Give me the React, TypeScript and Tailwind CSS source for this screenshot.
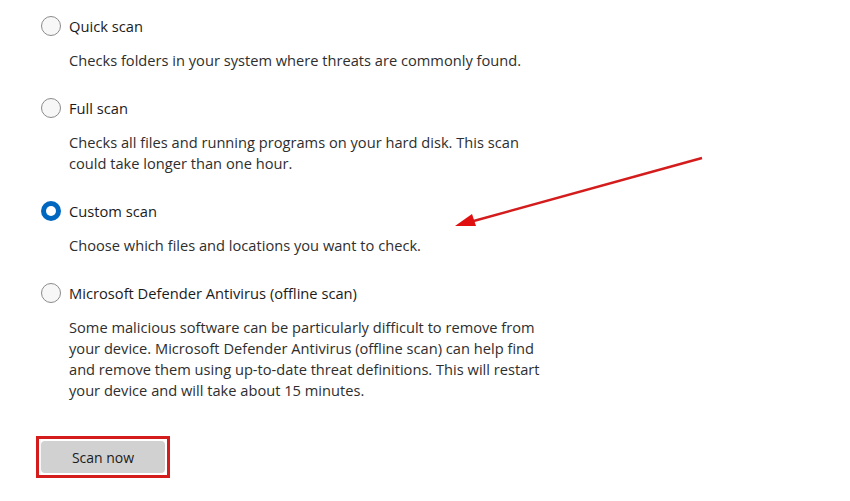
import React from "react";

function Radio({ checked }: { checked?: boolean }) {
  if (checked) {
    return (
      <span className="box-border flex h-[20px] w-[20px] shrink-0 items-center justify-center rounded-full bg-[#0067c0]">
        <span className="h-[10px] w-[10px] rounded-full bg-white" />
      </span>
    );
  }
  return <span className="box-border h-[20px] w-[20px] shrink-0 rounded-full border border-[#8b8b8b] bg-[#f7f7f7]" />;
}

function Option({ label, desc, checked }: { label: string; desc: React.ReactNode; checked?: boolean }) {
  return (
    <div className="flex flex-col">
      <div className="flex h-[20px] items-center gap-[8px]">
        <Radio checked={checked} />
        <span className="text-[14.7px] leading-[20px] text-[#1b1b1b]">{label}</span>
      </div>
      <p className="mt-[14px] whitespace-nowrap pl-[28px] text-[14.65px] leading-[21px] text-[#2e2e2e]">{desc}</p>
    </div>
  );
}

export default function App() {
  return (
    <div
      className="relative h-[501px] w-[850px] overflow-hidden bg-white"
      style={{ fontFamily: '"Open Sans", "Noto Sans", sans-serif' }}
    >
      <div className="flex flex-col gap-[27px] pl-[41px] pt-[16px]">
        <Option label="Quick scan" desc="Checks folders in your system where threats are commonly found." />
        <Option
          label="Full scan"
          desc={<>Checks all files and running programs on your hard disk. This scan<br />could take longer than one hour.</>}
        />
        <Option label="Custom scan" checked desc="Choose which files and locations you want to check." />
        <Option
          label="Microsoft Defender Antivirus (offline scan)"
          desc={
            <>
              Some malicious software can be particularly difficult to remove from
              <br />
              your device. Microsoft Defender Antivirus (offline scan) can help find
              <br />
              and remove them using up-to-date threat definitions. This will restart
              <br />
              your device and will take about 15 minutes.
            </>
          }
        />
      </div>
      <div className="ml-[36px] mt-[35px] w-[134px] border-[3px] border-[#d41c1c] p-[2px]">
        <button className="flex h-[32px] w-full items-center justify-center rounded-[4px] bg-[#d1d1d1] text-[14px] text-[#1b1b1b]">
          Scan now
        </button>
      </div>
      <svg className="absolute left-0 top-0" width="850" height="501">
        <line x1="702" y1="158" x2="470" y2="222" stroke="#d41c1c" strokeWidth="2.5" />
        <polygon points="455,226 472,214 476,226" fill="#e01010" />
      </svg>
    </div>
  );
}
